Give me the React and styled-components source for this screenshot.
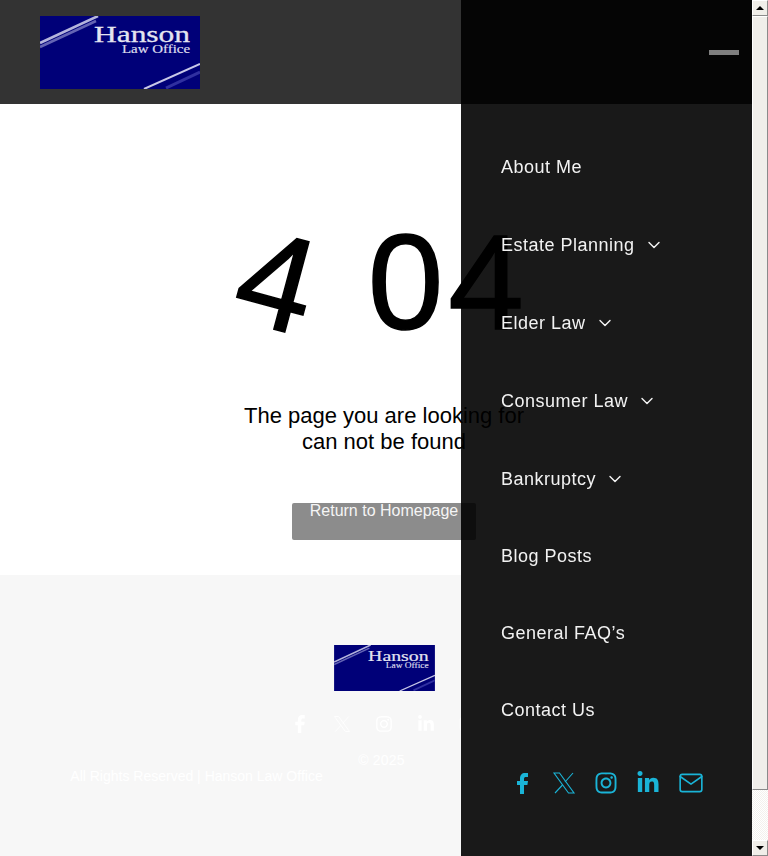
import React from 'react';
import styled, { createGlobalStyle } from 'styled-components';
import { FaInstagram, FaLinkedinIn } from 'react-icons/fa';
import { FiMail } from 'react-icons/fi';
import { LuChevronDown } from 'react-icons/lu';

const GlobalStyle = createGlobalStyle`
  html {
    overflow: hidden;
  }
  body {
    margin: 0;
    background: #fff;
    font-family: "Liberation Sans", Arial, sans-serif;
  }
`;

const Page = styled.div`
  width: 768px;
  height: 856px;
`;

const Header = styled.header`
  height: 104px;
  padding: 16px 40px;
  box-sizing: border-box;
  background: #333333;
`;

const Main = styled.main`
  height: 471px;
  display: flex;
  flex-direction: column;
  align-items: center;
  background: #fff;
  color: #000;
`;

const BigCode = styled.h1`
  margin: 106px 0 0;
  height: 144px;
  display: flex;
  font-size: 136px;
  line-height: 144px;
  font-weight: 400;
  letter-spacing: 5px;
  -webkit-text-stroke: 1.5px #000;
`;

const TiltedDigit = styled.span`
  display: inline-block;
  transform: rotate(15deg);
  margin-right: 48px;
`;

const Message = styled.p`
  margin: 49px 0 0;
  font-size: 22px;
  line-height: 26px;
  text-align: center;
`;

const HomeButton = styled.a`
  margin-top: 48px;
  width: 184px;
  height: 37px;
  border-radius: 2px;
  background: #8c8c8c;
  color: #f5f5f5;
  font-size: 16px;
  line-height: 16px;
  text-align: center;
`;

const Footer = styled.footer`
  height: 281px;
  padding-top: 70px;
  box-sizing: border-box;
  background: #f7f7f7;
  color: #fff;
  display: flex;
  flex-direction: column;
  align-items: center;
`;

const Socials = styled.div`
  display: flex;
  align-items: center;
  gap: 18px;
  color: ${(p) => p.$color};
  font-size: ${(p) => p.$size}px;
`;

const FooterSocials = styled(Socials)`
  margin-top: 21px;
  svg {
    width: 18px;
    height: 18px;
  }
`;

const IconSlot = styled.span`
  width: 24px;
  height: 24px;
  display: flex;
  align-items: center;
  justify-content: center;
  svg {
    display: block;
    flex: none;
  }
`;

const Copyright = styled.div`
  margin-top: 16px;
  margin-right: 5px;
  font-size: 14px;
  line-height: 16px;
  letter-spacing: 0.2px;
`;

const Legal = styled.div`
  width: 393px;
  align-self: flex-start;
  text-align: center;
  font-size: 14px;
  line-height: 16px;
`;

const Drawer = styled.aside`
  position: fixed;
  top: 0;
  bottom: 0;
  left: 461px;
  width: 291px;
  background: rgba(0, 0, 0, 0.9);
  color: #f2f2f2;
`;

const DrawerTop = styled.div`
  height: 104px;
  display: flex;
  align-items: center;
  justify-content: flex-end;
  padding-right: 13px;
`;

const MenuBar = styled.span`
  width: 30px;
  height: 5px;
  background: #808080;
`;

const Nav = styled.nav`
  display: flex;
  flex-direction: column;
  padding: 24px 40px 0;
`;

const NavItem = styled.a`
  height: ${(p) => p.$h}px;
  display: flex;
  align-items: center;
  gap: 9px;
  font-size: 18px;
  letter-spacing: 0.5px;
  svg {
    font-size: 20px;
    stroke-width: 1.7;
  }
`;

const DrawerSocials = styled(Socials)`
  margin-top: 22px;
  padding-left: 49px;
  svg.mail {
    width: 26px;
    height: 26px;
    stroke-width: 1.5;
    margin-left: 1px;
  }
`;

const Scrollbar = styled.div`
  position: fixed;
  top: 0;
  right: 0;
  bottom: 0;
  width: 16px;
  display: flex;
  flex-direction: column;
  background: repeating-conic-gradient(#ffffff 0 25%, #f3f1ed 0 50%) 0 0 / 2px 2px;
`;

const ScrollArrow = styled.div`
  height: 16px;
  flex: none;
  box-sizing: border-box;
  display: flex;
  align-items: center;
  justify-content: center;
  background: #f0eee9;
  border: 1px solid;
  border-color: #ffffff #8a8a8a #8a8a8a #ffffff;
  &::before {
    content: '';
    border-left: 4px solid transparent;
    border-right: 4px solid transparent;
    ${(p) => (p.$down ? 'border-top: 4px solid #000;' : 'border-bottom: 4px solid #000;')}
  }
`;

const ScrollThumb = styled.div`
  height: 774px;
  flex: none;
  box-sizing: border-box;
  background: #f0eeea;
  border: 1px solid;
  border-color: #ffffff #8a8a8a #8a8a8a #ffffff;
`;

const ScrollTrack = styled.div`
  flex: 1;
`;

const Logo = styled.svg`
  display: block;
`;

function HansonLogo({ width, height }) {
  return (
    <Logo width={width} height={height} viewBox="0 0 160 73">
      <rect width="160" height="73" fill="#000078" />
      <path d="M0 27 L58 0" stroke="#b4b4dc" strokeWidth="2.5" />
      <path d="M0 31 L56 5" stroke="#6464b4" strokeWidth="2.5" />
      <path d="M104 73 L160 48" stroke="#c8c8e8" strokeWidth="2" />
      <path d="M126 72 L160 56" stroke="#3030a0" strokeWidth="3" />
      <text x="54" y="26" fill="#e4e4f0" stroke="#e4e4f0" strokeWidth="0.3" fontFamily="Liberation Serif" fontSize="24" textLength="96" lengthAdjust="spacingAndGlyphs">Hanson</text>
      <text x="82" y="37" fill="#dcdcec" stroke="#dcdcec" strokeWidth="0.2" fontFamily="Liberation Serif" fontSize="12" textLength="68" lengthAdjust="spacingAndGlyphs">Law Office</text>
    </Logo>
  );
}

function FacebookIcon() {
  return (
    <svg width="11" height="21" viewBox="0 0 11 21" fill="currentColor">
      <path d="M3 21V12H0V8h3V5.5C3 2 5 0 8 0h3v4H9C7.7 4 7 4.6 7 6v2h4l-.6 4H7v9z" />
    </svg>
  );
}

function XIcon() {
  return (
    <svg width="24" height="24" viewBox="0 0 24 24" fill="none" stroke="currentColor" strokeWidth="1.1">
      <path d="M2 2h5.5l14.5 20h-5.5z" />
      <path d="M21 2 13 11M10.5 14 3 22" />
    </svg>
  );
}

function SocialIcons({ mailClass }) {
  return (
    <>
      <IconSlot><FacebookIcon /></IconSlot>
      <IconSlot><XIcon /></IconSlot>
      <IconSlot><FaInstagram /></IconSlot>
      <IconSlot><FaLinkedinIn /></IconSlot>
      <IconSlot><FiMail className={mailClass} /></IconSlot>
    </>
  );
}

const menu = [
  ['About Me', false, 78],
  ['Estate Planning', true, 78],
  ['Elder Law', true, 78],
  ['Consumer Law', true, 78],
  ['Bankruptcy', true, 78],
  ['Blog Posts', false, 77],
  ['General FAQ’s', false, 77],
  ['Contact Us', false, 77],
];

export default function App() {
  return (
    <Page>
      <GlobalStyle />
      <Header>
        <HansonLogo width={160} height={73} />
      </Header>
      <Main>
        <BigCode>
          <TiltedDigit>4</TiltedDigit>
          <span>04</span>
        </BigCode>
        <Message>
          The page you are looking for
          <br />
          can not be found
        </Message>
        <HomeButton>Return to Homepage</HomeButton>
      </Main>
      <Footer>
        <HansonLogo width={101} height={46} />
        <FooterSocials $color="#fff" $size={18}>
          <SocialIcons />
        </FooterSocials>
        <Copyright>© 2025</Copyright>
        <Legal>All Rights Reserved | Hanson Law Office</Legal>
      </Footer>
      <Drawer>
        <DrawerTop>
          <MenuBar />
        </DrawerTop>
        <Nav>
          {menu.map(([label, hasSub, h]) => (
            <NavItem key={label} $h={h}>
              {label}
              {hasSub && <LuChevronDown />}
            </NavItem>
          ))}
        </Nav>
        <DrawerSocials $color="#1ab4d7" $size={24}>
          <SocialIcons mailClass="mail" />
        </DrawerSocials>
      </Drawer>
      <Scrollbar>
        <ScrollArrow />
        <ScrollThumb />
        <ScrollTrack />
        <ScrollArrow $down />
      </Scrollbar>
    </Page>
  );
}
